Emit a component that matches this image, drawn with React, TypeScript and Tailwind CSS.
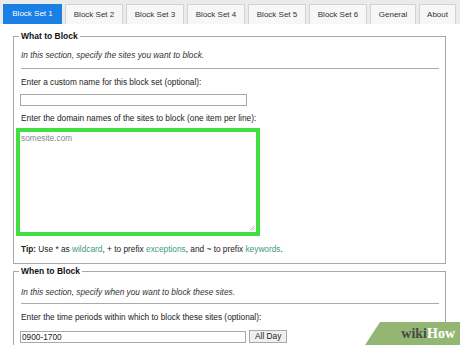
import React from "react";

const tabs = ["Block Set 1", "Block Set 2", "Block Set 3", "Block Set 4", "Block Set 5", "Block Set 6", "General", "About"];

export default function App() {
  return (
    <div className="relative w-[460px] h-[345px] overflow-hidden bg-white font-['Liberation_Sans',Arial,sans-serif] text-[8.3px] text-[#222]">
      <div className="flex items-end gap-[3px] h-[24px] pl-[3px] bg-[#ebebeb] text-[8px]">
        {tabs.map((t, i) =>
          i === 0 ? (
            <div key={t} className="h-[20px] w-[59px] flex items-center justify-center bg-[#1a80e6] text-white">
              {t}
            </div>
          ) : (
            <div
              key={t}
              className={`h-[20px] flex items-center justify-center bg-[#f7f7f7] border border-b-0 border-[#d2d2d2] text-[#333] ${
                t === "General" ? "w-[46px]" : t === "About" ? "w-[37px]" : "w-[58px]"
              }`}
            >
              {t}
            </div>
          )
        )}
      </div>

      <div className="pl-[13px] pt-[7px]">
        <fieldset className="w-[433px] border border-[#a8a8a8] pl-[5px] pr-[6px] pb-[9px]">
          <legend className="px-[2px] font-bold text-[8.5px] leading-[10px] text-[#111]">What to Block</legend>
          <div className="pl-[2px]">
            <div className="mt-[9px] italic leading-[10px] text-[#333]">In this section, specify the sites you want to block.</div>
            <div className="mt-[8px] border-t border-[#aaaaaa]" />
            <div className="mt-[8px] leading-[10px]">Enter a custom name for this block set (optional):</div>
            <div className="mt-[7px] -ml-[1px] w-[227px] h-[12px] border border-[#a9a9a9] bg-white" />
            <div className="mt-[7px] leading-[10px]">Enter the domain names of the sites to block (one item per line):</div>
            <div className="relative mt-[5px] -ml-[5px] w-[244px] h-[108px] border-[4px] border-[#3fe03f] bg-white pl-[1px] pt-[1px] leading-[10px] text-[#888]">
              somesite.com
              <svg className="absolute right-[1px] bottom-[1px]" width="6" height="6" viewBox="0 0 6 6">
                <path d="M1 5.5 L5.5 1 M3.5 5.5 L5.5 3.5" stroke="#999" strokeWidth="0.8" />
              </svg>
            </div>
            <div className="mt-[8px] leading-[10px]">
              <span className="font-bold">Tip:</span> Use * as <span className="text-[#3d9b86]">wildcard</span>, + to prefix{" "}
              <span className="text-[#3d9b86]">exceptions</span>, and ~ to prefix <span className="text-[#3d9b86]">keywords</span>.
            </div>
          </div>
        </fieldset>

        <fieldset className="mt-[2px] w-[433px] h-[120px] border border-[#a8a8a8] pl-[5px] pr-[6px]">
          <legend className="px-[2px] font-bold text-[8.5px] leading-[10px] text-[#111]">When to Block</legend>
          <div className="pl-[2px]">
            <div className="mt-[11px] italic leading-[10px] text-[#333]">In this section, specify when you want to block these sites.</div>
            <div className="mt-[6px] border-t border-[#aaaaaa]" />
            <div className="mt-[8px] leading-[10px]">Enter the time periods within which to block these sites (optional):</div>
            <div className="mt-[8px] -ml-[1px] flex items-center gap-[3px]">
              <div className="w-[226px] h-[12px] border border-[#a9a9a9] bg-white pl-[1px] leading-[10px]">0900-1700</div>
              <div className="h-[13px] px-[5px] border border-[#a9a9a9] bg-[#efefef] leading-[11px] text-[#222]">All Day</div>
            </div>
          </div>
        </fieldset>
      </div>

      <div className="absolute right-0 bottom-0 w-[95px] h-[23px] bg-[#93b773] [clip-path:polygon(15px_0,100%_0,100%_100%,0_100%)] flex items-center justify-end pr-[5px] font-['Liberation_Serif',Georgia,serif] font-bold text-[14px] leading-[14px]">
        <span className="text-[#4a4a4a]">wiki</span>
        <span className="text-white">How</span>
      </div>
    </div>
  );
}
